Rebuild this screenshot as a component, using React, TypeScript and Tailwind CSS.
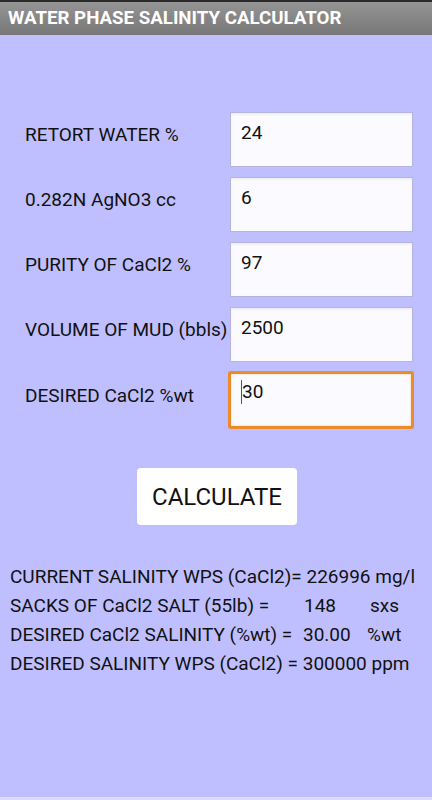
import React from "react";

const rows = [
  { label: "RETORT WATER %", value: "24", mt: "mt-[77px]" },
  { label: "0.282N AgNO3 cc", value: "6", mt: "mt-[10px]" },
  { label: "PURITY OF CaCl2 %", value: "97", mt: "mt-[10px]" },
  { label: "VOLUME OF MUD (bbls)", value: "2500", mt: "mt-[10px]" },
];

export default function App() {
  return (
    <div
      className="w-[432px] h-[800px] flex flex-col bg-[#bfbfff] overflow-hidden"
      style={{ fontFamily: "Roboto, 'Liberation Sans', sans-serif" }}
    >
      <div className="h-[2px] bg-[#2a2a2a]" />
      <div className="h-[33px] flex items-center pl-[8px] bg-gradient-to-b from-[#959595] to-[#777777]">
        <span className="text-white font-bold text-[18.7px] leading-none">
          WATER PHASE SALINITY CALCULATOR
        </span>
      </div>
      <div className="flex-1 flex flex-col">
        {rows.map((r, i) => (
          <div key={i} className={`flex items-center ${r.mt}`}>
            <div className="w-[230px] shrink-0 pl-[25px] pb-[8px] text-[19px] text-[#111] whitespace-nowrap">
              {r.label}
            </div>
            <div className="w-[183px] h-[55px] bg-[#fbfbff] border border-[#b4b4e2] shadow-[inset_0_2px_2px_rgba(0,0,0,0.05)] pl-[10px] pt-[9px] text-[19px] text-[#111] leading-[22px]">
              {r.value}
            </div>
          </div>
        ))}
        <div className="flex items-center mt-[9px]">
          <div className="w-[228px] shrink-0 pl-[25px] pb-[8px] text-[19px] text-[#111] whitespace-nowrap">
            DESIRED CaCl2 %wt
          </div>
          <div className="w-[186px] h-[58px] bg-[#fbfbff] border-[3px] border-[#ea8b2c] rounded-[3px] pl-[10px] pt-[7px] text-[19px] text-[#111] leading-[22px] flex items-start shadow-[inset_0_0_2px_rgba(240,160,80,0.6)]">
            <span className="inline-block w-[1px] h-[24px] bg-[#555] -mt-[1px]" />
            <span>30</span>
          </div>
        </div>
        <div className="flex justify-center mt-[39px]">
          <button className="ml-[2px] w-[160px] h-[57px] bg-white rounded-[4px] text-[24px] text-[#111] flex items-center justify-center">
            CALCULATE
          </button>
        </div>
        <div className="mt-[37px] pl-[10px] text-[19px] text-[#111] leading-[29px] whitespace-nowrap">
          <div className="flex">
            <span>CURRENT SALINITY WPS (CaCl2)= 226996 mg/l</span>
          </div>
          <div className="flex">
            <span className="w-[294px] shrink-0">SACKS OF CaCl2 SALT (55lb) =</span>
            <span className="w-[66px] shrink-0">148</span>
            <span>sxs</span>
          </div>
          <div className="flex">
            <span className="w-[293px] shrink-0">DESIRED CaCl2 SALINITY (%wt) =</span>
            <span className="w-[64px] shrink-0">30.00</span>
            <span>%wt</span>
          </div>
          <div className="flex">
            <span>DESIRED SALINITY WPS (CaCl2) = 300000 ppm</span>
          </div>
        </div>
      </div>
      <div className="h-[3px] bg-[#dcdcf5]" />
    </div>
  );
}
